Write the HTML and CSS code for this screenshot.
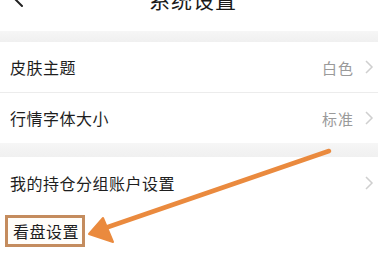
FILE: index.html
```html
<!DOCTYPE html>
<html lang="zh">
<head>
<meta charset="utf-8">
<link rel="stylesheet" href="styles.css">
</head>
<body>
<div class="page">
  <header class="header">
    <svg class="back" width="20" height="14" viewBox="0 0 20 14"><path d="M4 -6 L10 0 L16 6" fill="none" stroke="#222" stroke-width="2" stroke-linecap="round"/></svg>
    <div class="title">系统设置</div>
  </header>
  <div class="band band1"></div>
  <div class="group">
    <div class="row row1 divided">
      <span class="label">皮肤主题</span>
      <span class="value">白色</span>
      <span class="chev"><svg width="10" height="16" viewBox="0 0 10 16"><path d="M2 2 L8 8 L2 14" fill="none" stroke="#cfcfcf" stroke-width="1.5"/></svg></span>
    </div>
    <div class="row row2">
      <span class="label">行情字体大小</span>
      <span class="value">标准</span>
      <span class="chev"><svg width="10" height="16" viewBox="0 0 10 16"><path d="M2 2 L8 8 L2 14" fill="none" stroke="#cfcfcf" stroke-width="1.5"/></svg></span>
    </div>
  </div>
  <div class="band band2"></div>
  <div class="group">
    <div class="row row3">
      <span class="label">我的持仓分组账户设置</span>
      <span class="chev"><svg width="10" height="16" viewBox="0 0 10 16"><path d="M2 2 L8 8 L2 14" fill="none" stroke="#cfcfcf" stroke-width="1.5"/></svg></span>
    </div>
    <div class="row row4">
      <span class="label boxed">看盘设置</span>
    </div>
  </div>
  <svg class="arrow" width="378" height="255" viewBox="0 0 378 255">
    <line x1="329" y1="151" x2="108" y2="227" stroke="#ea8a3e" stroke-width="4.5" stroke-linecap="round"/>
    <polygon points="89,234 103,218 113,242" fill="#ea8a3e" stroke="#ea8a3e" stroke-width="2" stroke-linejoin="round"/>
  </svg>
</div>
</body>
</html>
```
FILE: styles.css
```css
html, body {
  margin: 0;
  padding: 0;
  background: #ffffff;
}
.page {
  position: relative;
  width: 378px;
  height: 255px;
  overflow: hidden;
  font-family: "Noto Sans CJK SC", "Noto Sans", sans-serif;
  color: #1e1e1e;
}
.header {
  height: 31px;
  background: #ffffff;
  display: flex;
  justify-content: center;
}
.back {
  position: absolute;
  left: 6px;
  top: 0;
}
.title {
  margin-top: -15px;
  font-size: 21px;
  line-height: 28px;
  letter-spacing: 1px;
  color: #1a1a1a;
  padding-left: 8px;
}
.band {
  background: linear-gradient(#f6f6f6, #f0f0f0);
}
.band1 {
  height: 11px;
}
.band2 {
  height: 14px;
}
.group {
  background: #ffffff;
}
.row {
  display: flex;
  align-items: center;
  padding: 0 2px 0 10px;
}
.row1 {
  height: 50px;
}
.divided {
  border-bottom: 1px solid #ececec;
}
.row2 {
  height: 50px;
}
.row3 {
  height: 51px;
}
.row4 {
  height: 47px;
  padding-left: 5px;
  align-items: flex-start;
  padding-top: 7px;
  box-sizing: border-box;
}
.label {
  flex: 1;
  font-size: 16px;
  letter-spacing: 0.5px;
  line-height: 20px;
}
.value {
  font-size: 15px;
  letter-spacing: 1px;
  color: #9a9a9a;
  margin-right: 10px;
}
.chev {
  display: flex;
  width: 12px;
}
.boxed {
  flex: none;
  border: 3px solid #c48c5e;
  padding: 3px 3px 3px 5px;
  background: #fffdf9;
}
.arrow {
  position: absolute;
  left: 0;
  top: 0;
  pointer-events: none;
}
```
